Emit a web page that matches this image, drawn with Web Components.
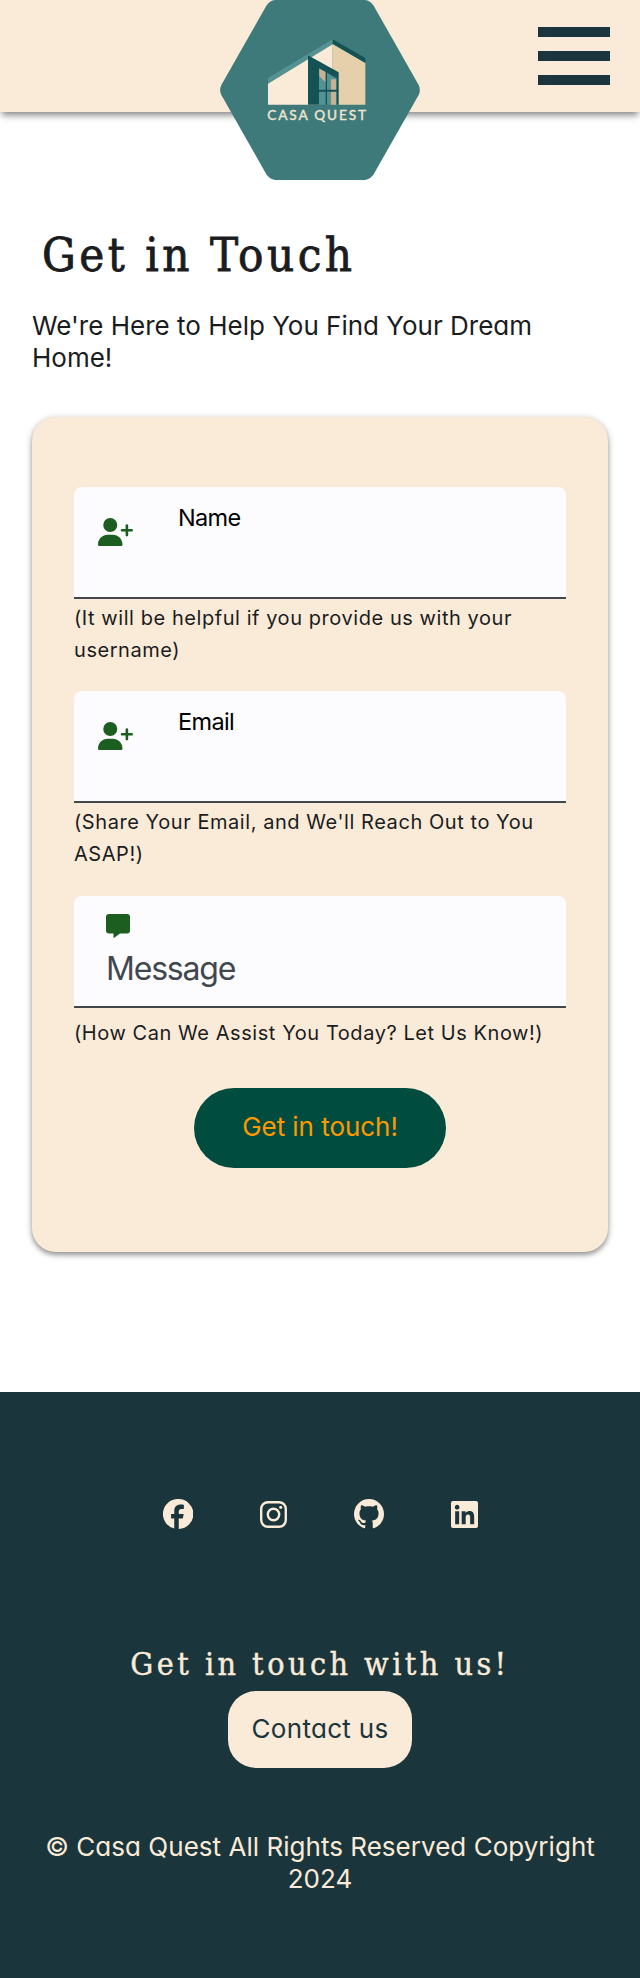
<!DOCTYPE html>
<html lang="en">
<head>
<meta charset="utf-8">
<title>Casa Quest</title>
<style>
body{margin:0;background:#fff;color:#1a1c1e;--cream:#faebd8;--ink:#1a353b;--sans:Inter,"Liberation Sans",sans-serif;--serif:"DejaVu Serif Condensed","DejaVu Serif",serif}
</style>
</head>
<body>
<casa-page></casa-page>
<script>
const define=(name,html)=>customElements.define(name,class extends HTMLElement{
  constructor(){super();this.attachShadow({mode:'open'}).innerHTML=html;}
});

define('casa-logo',`<style>:host{display:block;width:200px;height:180px}svg{display:block}</style>
<svg width="200" height="180" viewBox="0 0 600 540">
<path fill="#3f7a7b" d="M165 0H435Q451 2 461 17L596 255Q603 270 596 285L461 523Q451 538 435 540H165Q149 538 139 523L4 285Q-3 270 4 255L139 17Q149 2 165 0Z"/>
<path fill="#faebd8" d="M144 250L338 131V314H144Z"/>
<path fill="#e5d0ab" d="M338 131L436 188V314H338Z"/>
<path fill="#569294" d="M144 234L338 118V133L144 251Z"/>
<path fill="#135355" d="M338 118L436 174V189L338 132Z"/>
<path fill="#135355" d="M264 166L356 217V314H264Z"/>
<path fill="#569294" d="M297 205L350 235V314H297Z"/>
<path fill="#c8b290" d="M298 206L317 216V247L298 229ZM333 238H348V314H333Z"/>
<path fill="#135355" d="M317 212H321V314H317ZM297 269H352V275H297Z"/>
<text x="142" y="361" textLength="296" font-family="Lato,sans-serif" font-weight="400" font-size="41" fill="#f0e5cf" stroke="#f0e5cf" stroke-width="1.200">CASA QUEST</text>
</svg>`);

define('menu-button',`<style>:host{display:flex;flex-direction:column;gap:14px;width:72px}i{height:10px;background:var(--ink)}</style><i></i><i></i><i></i>`);

define('site-header',`<style>:host{display:grid;grid-template-columns:1fr 200px 1fr;height:112px;background:var(--cream);box-shadow:0 5px 6px -2px rgba(0,0,0,.4),0 4px 12px -2px rgba(0,0,0,.15)}
menu-button{justify-self:end;margin:27px 30px 0 0}casa-logo{grid-column:2;position:relative}</style>
<casa-logo></casa-logo><menu-button></menu-button>`);

define('page-intro',`<style>:host{display:block;padding:111px 32px 0}
h1{margin:0 0 0 10px;font:400 47px/64px var(--serif);letter-spacing:3.5px;white-space:nowrap;-webkit-text-stroke:.8px currentColor}
p{margin:23px 0 0;font:400 26px/32px var(--sans);font-feature-settings:"cv11";letter-spacing:0;white-space:nowrap}</style>
<h1>Get in Touch</h1><p>We're Here to Help You Find Your Dream<br>Home!</p>`);

define('user-icon',`<style>:host{display:block}svg{display:block}</style>
<svg width="35" height="28" viewBox="0 0 640 512" fill="#1b5e20"><path d="M96 128a128 128 0 1 1 256 0A128 128 0 1 1 96 128zM0 482.300C0 383.800 79.800 304 178.300 304h91.400C368.200 304 448 383.800 448 482.300c0 16.400-13.300 29.700-29.700 29.700H29.700C13.300 512 0 498.700 0 482.300zM504 312V248H440c-13.300 0-24-10.700-24-24s10.700-24 24-24h64V136c0-13.300 10.700-24 24-24s24 10.700 24 24v64h64c13.300 0 24 10.700 24 24s-10.700 24-24 24H552v64c0 13.300-10.700 24-24 24s-24-10.700-24-24z"/></svg>`);

define('message-icon',`<style>:host{display:block}svg{display:block}</style>
<svg width="24" height="24" viewBox="0 0 24 24" fill="#1b5e20"><path d="M3 0H21A3 3 0 0 1 24 3V16.500A3 3 0 0 1 21 19.500H14L8.200 23.800Q7.500 24.300 7.500 23.300V19.500H3A3 3 0 0 1 0 16.500V3A3 3 0 0 1 3 0Z"/></svg>`);

define('form-field',`<style>:host{display:block}
.box{display:flex;box-sizing:border-box;height:112px;background:#fcfcff;border-radius:8px 8px 0 0;border-bottom:2px solid #41484d}
:host([stacked]) .box{flex-direction:column}
.icon{margin:31px 0 0 24px;width:80px}
.label{color:#000;font:400 23.500px/32px var(--sans);letter-spacing:-.65px;margin-top:15px}
:host([stacked]) .icon{margin:18px 0 0 32px;width:24px}
:host([stacked]) .label{margin:11px 0 0 32px;font-size:32px;line-height:40px;letter-spacing:-1.200px;color:#41484d}
.help{margin-top:3px;font:400 20px/32px var(--sans);letter-spacing:.56px;white-space:nowrap}
:host([stacked]) .help{margin-top:9px}</style>
<div class="box"><div class="icon"><slot name="icon"></slot></div><div class="label"><slot name="label"></slot></div></div>
<div class="help"><slot></slot></div>`);

define('contact-card',`<style>:host{display:flex;flex-direction:column;box-sizing:border-box;margin:43px 32px 0;height:835px;padding:70px 42px 0;background:var(--cream);border-radius:24px;box-shadow:0 3px 5px rgba(0,0,0,.35),0 1px 9px rgba(0,0,0,.15)}
form-field{height:205px}form-field:first-of-type{height:204px}form-field[stacked]{height:192px}
button{align-self:center;width:252px;height:80px;border:0;border-radius:40px;padding:0 0 2px;background:#004d40;color:#ff9800;font:400 26px/32px var(--sans);letter-spacing:-.05px;font-feature-settings:"cv11"}</style>
<form-field><user-icon slot="icon"></user-icon><span slot="label">Name</span>(It will be helpful if you provide us with your<br>username)</form-field>
<form-field><user-icon slot="icon"></user-icon><span slot="label">Email</span>(Share Your Email, and We'll Reach Out to You<br>ASAP!)</form-field>
<form-field stacked><message-icon slot="icon"></message-icon><span slot="label">Message</span>(How Can We Assist You Today? Let Us Know!)</form-field>
<button>Get in touch!</button>`);

define('social-links',`<style>:host{display:flex;height:32px;align-items:center;padding-left:163px}svg{display:block;fill:var(--cream)}</style>
<svg width="30" height="30" viewBox="0 0 20 20"><path fill-rule="evenodd" d="M10 0a10 10 0 0 0-2.500 19.700V13H5.400V10H7.500V8.200C7.500 5.100 9 3.700 12 3.700c.6 0 1.500.1 1.900.2V6.600h-1.500c-1.500 0-1.900.6-1.900 2V10h3.300l-.6 3h-2.700v7A10 10 0 0 0 10 0Z"/></svg>
<svg style="margin-left:67px" width="27" height="27" viewBox="0 0 27 27"><rect x="1.200" y="1.200" width="24.600" height="24.600" rx="6.700" fill="none" stroke="#faebd8" stroke-width="2.400"/><circle cx="13.500" cy="13.500" r="5.700" fill="none" stroke="#faebd8" stroke-width="2.400"/><circle cx="20.700" cy="6.300" r="1.600"/></svg>
<svg style="margin-left:67px" width="30" height="30" viewBox="2 2 20 20"><path d="M12 2A10 10 0 0 0 2 12c0 4.420 2.870 8.170 6.840 9.500.5.080.66-.23.66-.5v-1.690c-2.770.6-3.360-1.340-3.360-1.340-.46-1.160-1.110-1.470-1.110-1.470-.91-.62.070-.6.070-.6 1 .070 1.530 1.030 1.530 1.030.87 1.520 2.340 1.070 2.910.83.090-.65.350-1.090.63-1.340-2.220-.25-4.550-1.110-4.550-4.920 0-1.110.38-2 1.030-2.710-.1-.25-.45-1.290.1-2.640 0 0 .84-.27 2.750 1.020.79-.22 1.650-.33 2.500-.33s1.710.11 2.500.33c1.910-1.290 2.750-1.020 2.750-1.020.55 1.350.2 2.390.1 2.640.65.710 1.030 1.600 1.030 2.710 0 3.820-2.340 4.660-4.570 4.910.36.310.69.92.69 1.850V21c0 .27.16.59.67.5C19.140 20.160 22 16.420 22 12A10 10 0 0 0 12 2z"/></svg>
<svg style="margin-left:67px" width="27" height="27" viewBox="0 32 448 448"><path d="M416 32H31.900C14.300 32 0 46.500 0 64.300v383.400C0 465.500 14.300 480 31.900 480H416c17.600 0 32-14.500 32-32.300V64.300c0-17.800-14.400-32.300-32-32.300zM135.400 416H69V202.200h66.500V416zm-33.200-243c-21.300 0-38.500-17.300-38.500-38.500S80.900 96 102.200 96c21.200 0 38.500 17.300 38.500 38.500 0 21.300-17.200 38.500-38.500 38.500zm282.100 243h-66.400V312c0-24.800-.5-56.700-34.500-56.700-34.600 0-39.900 27-39.900 54.900V416h-66.400V202.200h63.700v29.200h.9c8.900-16.800 30.600-34.500 62.900-34.500 67.200 0 79.700 44.300 79.700 101.900V416z"/></svg>`);

define('site-footer',`<style>:host{display:block;box-sizing:border-box;height:586px;margin-top:140px;padding-top:106px;background:var(--ink);color:var(--cream);text-align:center}
h2{margin:112px 0 0;font:400 32px/44px var(--serif);letter-spacing:3.450px;white-space:nowrap;-webkit-text-stroke:.4px currentColor}
button{display:block;margin:5px auto 0;width:184px;height:77px;border:0;border-radius:28px;padding:0 0 2px;background:var(--cream);color:var(--ink);font:400 26px/32px var(--sans);letter-spacing:.3px;font-feature-settings:"cv11"}
p{margin:63px 0 0;font:400 26px/32px var(--sans);letter-spacing:.03px;font-feature-settings:"cv11";white-space:nowrap}</style>
<social-links></social-links><h2>Get in touch with us!</h2><button>Contact us</button><p>© Casa Quest All Rights Reserved Copyright<br>2024</p>`);

define('casa-page',`<style>:host{display:block}</style>
<site-header></site-header><main><page-intro></page-intro><contact-card></contact-card></main><site-footer></site-footer>`);
</script>
</body>
</html>
